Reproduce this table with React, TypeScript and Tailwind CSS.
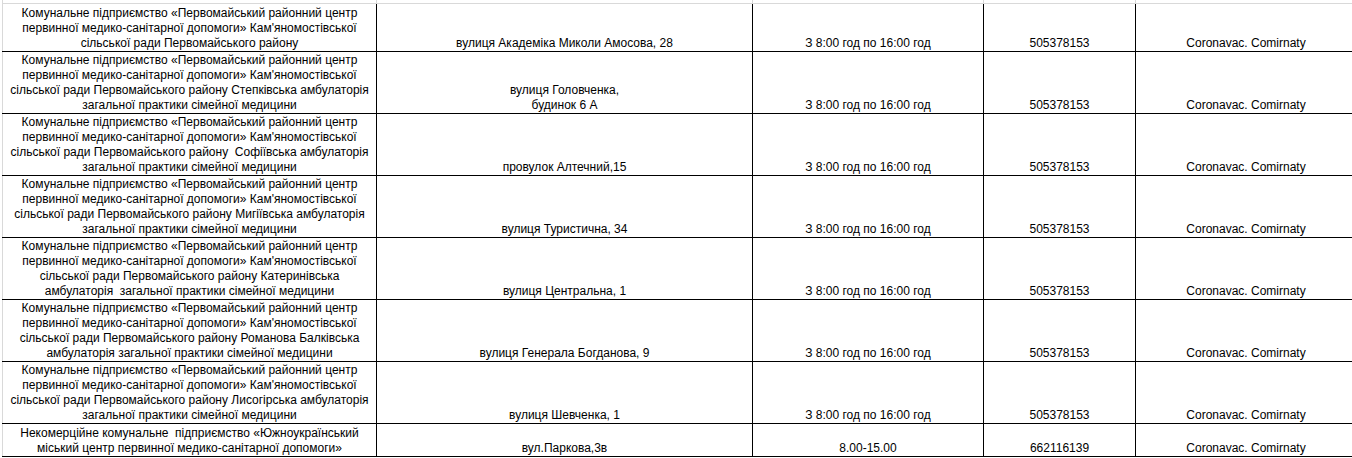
const LEAD = [
  "Комунальне підприємство «Первомайський районний центр",
  "первинної медико-санітарної допомоги» Кам'яномостівської",
];

type Row = {
  name: string[];
  address: string[];
  hours: string;
  phone: string;
  tall: boolean;
};

const HOURS = "З 8:00 год по 16:00 год";

const rows: Row[] = [
  {
    name: [...LEAD, "сільської ради Первомайського району"],
    address: ["вулиця Академіка Миколи Амосова, 28"],
    hours: HOURS,
    phone: "505378153",
    tall: false,
  },
  {
    name: [
      ...LEAD,
      "сільської ради Первомайського району Степківська амбулаторія",
      "загальної практики сімейної медицини",
    ],
    address: ["вулиця Головченка,", "будинок 6 А"],
    hours: HOURS,
    phone: "505378153",
    tall: true,
  },
  {
    name: [
      ...LEAD,
      "сільської ради Первомайського району  Софіївська амбулаторія",
      "загальної практики сімейної медицини",
    ],
    address: ["провулок Алтечний,15"],
    hours: HOURS,
    phone: "505378153",
    tall: true,
  },
  {
    name: [
      ...LEAD,
      "сільської ради Первомайського району Мигіївська амбулаторія",
      "загальної практики сімейної медицини",
    ],
    address: ["вулиця Туристична, 34"],
    hours: HOURS,
    phone: "505378153",
    tall: true,
  },
  {
    name: [
      ...LEAD,
      "сільської ради Первомайського району Катеринівська",
      "амбулаторія  загальної практики сімейної медицини",
    ],
    address: ["вулиця Центральна, 1"],
    hours: HOURS,
    phone: "505378153",
    tall: true,
  },
  {
    name: [
      ...LEAD,
      "сільської ради Первомайського району Романова Балківська",
      "амбулаторія загальної практики сімейної медицини",
    ],
    address: ["вулиця Генерала Богданова, 9"],
    hours: HOURS,
    phone: "505378153",
    tall: true,
  },
  {
    name: [
      ...LEAD,
      "сільської ради Первомайського району Лисогірська амбулаторія",
      "загальної практики сімейної медицини",
    ],
    address: ["вулиця Шевченка, 1"],
    hours: HOURS,
    phone: "505378153",
    tall: true,
  },
  {
    name: [
      "Некомерційне комунальне  підприємство «Южноукраїнський",
      "міський центр первинної медико-санітарної допомоги»",
    ],
    address: ["вул.Паркова,3в"],
    hours: "8.00-15.00",
    phone: "662116139",
    tall: false,
  },
];

function Cell({ lines, className }: { lines: string[]; className: string }) {
  return (
    <div
      className={`flex flex-col justify-end items-center text-center whitespace-pre overflow-hidden ${className}`}
    >
      {lines.map((l, i) => (
        <div key={i}>{l}</div>
      ))}
    </div>
  );
}

export default function App() {
  return (
    <div
      className="w-screen h-[458px] overflow-hidden bg-white pl-[2px] text-[12px] leading-[15px] text-black"
      style={{ fontFamily: '"Liberation Sans", Arial, sans-serif' }}
    >
      {/* кінець попереднього рядка */}
      <div className="flex h-[3px] w-[1356px]">
        <div className="w-[375px] shrink-0 border-l border-r border-[#d9d9d9]" />
        <div className="w-[376px] shrink-0 border-r border-[#d9d9d9]" />
        <div className="w-[231px] shrink-0 border-r border-[#d9d9d9]" />
        <div className="w-[152px] shrink-0 border-r border-[#d9d9d9]" />
        <div className="w-[220px] shrink-0" />
      </div>

      {rows.map((r, i) => {
        const h =
          i === 0
            ? "h-[49px] border-t border-t-[#d9d9d9]"
            : r.tall
              ? "h-[62px]"
              : "h-[33px]";
        return (
          <div key={i} className={`flex w-[1356px] border-b border-black ${h}`}>
            <Cell
              lines={r.name}
              className="w-[375px] shrink-0 border-l border-l-[#d9d9d9] border-r border-r-black"
            />
            <Cell lines={r.address} className="w-[376px] shrink-0 border-r border-black" />
            <Cell lines={[r.hours]} className="w-[231px] shrink-0 border-r border-black" />
            <Cell lines={[r.phone]} className="w-[152px] shrink-0 border-r border-black" />
            <Cell lines={["Coronavac. Comirnaty"]} className="w-[220px] shrink-0" />
          </div>
        );
      })}
    </div>
  );
}
